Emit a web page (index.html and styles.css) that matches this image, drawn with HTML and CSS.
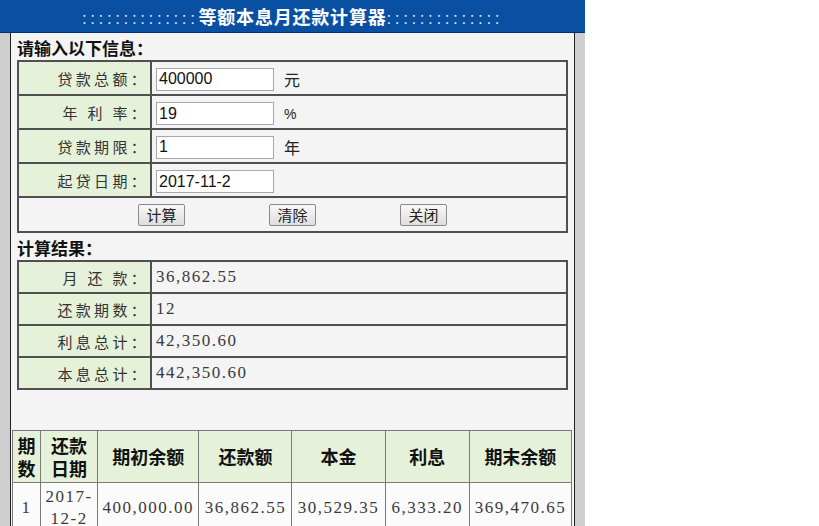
FILE: index.html
```html
<!DOCTYPE html>
<html lang="zh-CN">
<head>
<meta charset="utf-8">
<title>等额本息月还款计算器</title>
<link rel="stylesheet" href="styles.css">
</head>
<body>
<div class="wrap">
  <div class="header"><span class="dots">::::::::::::::</span><span class="title">等额本息月还款计算器</span><span class="dots">::::::::::::::</span></div>
  <div class="panel">
    <div class="sec-title">请输入以下信息：</div>
    <table class="form">
      <tr><td class="lbl">贷款总额：</td><td class="val"><input class="inp" type="text" value="400000"><span class="unit">元</span></td></tr>
      <tr><td class="lbl">年&nbsp;利&nbsp;率：</td><td class="val"><input class="inp" type="text" value="19"><span class="unit pct">%</span></td></tr>
      <tr><td class="lbl">贷款期限：</td><td class="val"><input class="inp" type="text" value="1"><span class="unit">年</span></td></tr>
      <tr><td class="lbl">起贷日期：</td><td class="val"><input class="inp" type="text" value="2017-11-2"></td></tr>
      <tr><td class="btns" colspan="2"><div class="btnrow"><button class="btn">计算</button><button class="btn">清除</button><button class="btn">关闭</button></div></td></tr>
    </table>
    <div class="sec-title second">计算结果：</div>
    <table class="form result">
      <tr><td class="lbl">月&nbsp;还&nbsp;款：</td><td class="num">36,862.55</td></tr>
      <tr><td class="lbl">还款期数：</td><td class="num">12</td></tr>
      <tr><td class="lbl">利息总计：</td><td class="num">42,350.60</td></tr>
      <tr><td class="lbl">本息总计：</td><td class="num">442,350.60</td></tr>
    </table>
    <table class="sched">
      <tr class="head">
        <th class="c1">期数</th><th class="c2">还款日期</th><th class="c3">期初余额</th><th class="c4">还款额</th><th class="c5">本金</th><th class="c6">利息</th><th class="c7">期末余额</th>
      </tr>
      <tr>
        <td>1</td><td>2017-12-2</td><td>400,000.00</td><td>36,862.55</td><td>30,529.35</td><td>6,333.20</td><td>369,470.65</td>
      </tr>
    </table>
  </div>
</div>
</body>
</html>
```
FILE: styles.css
```css
html, body {
  margin: 0;
  padding: 0;
  background: #ffffff;
}
body {
  font-family: "Noto Sans CJK SC", "Liberation Sans", sans-serif;
  color: #222;
}
.wrap {
  width: 585px;
  background: #cfcfcf;
}
.header {
  height: 32px;
  line-height: 32px;
  background: #0a50a2;
  border-bottom: 1px solid #05306a;
  color: #ffffff;
  text-align: center;
  font-weight: bold;
  font-size: 18px;
  white-space: nowrap;
}
.dots {
  font-family: "Liberation Sans", sans-serif;
  font-weight: normal;
  font-size: 17px;
  letter-spacing: 3.6px;
  color: #dfe8f5;
}
.title {
  letter-spacing: 0.8px;
}
.panel {
  margin: 0 10px;
  width: 563px;
  border-left: 1px solid #222;
  border-right: 1px solid #222;
  background: #f4f4f4;
  padding: 3px 0 0 0;
  min-height: 540px;
}
.sec-title {
  margin-left: 6px;
  font-size: 17px;
  font-weight: bold;
  line-height: 24px;
  height: 24px;
  color: #111;
}
.sec-title.second {
  margin-top: 3px;
}
.form {
  margin-left: 6px;
  width: 551px;
  border-collapse: collapse;
  border: 2px solid #505050;
}
.form td {
  border: 2px solid #505050;
  height: 32px;
  padding: 0;
}
.form .lbl {
  width: 130px;
  background: #e5f1d9;
  text-align: right;
  padding-right: 1px;
  font-size: 15px;
  letter-spacing: 3.3px;
  color: #333;
}
.form .val {
  padding-left: 4px;
  background: #f4f4f4;
}
.inp {
  box-sizing: border-box;
  width: 118px;
  height: 23px;
  border: 1px solid #a8a8a8;
  background: #ffffff;
  padding: 0 2px;
  font-family: "Liberation Sans", sans-serif;
  font-size: 16px;
  color: #111;
  vertical-align: middle;
  margin: 0;
}
.unit {
  margin-left: 10px;
  font-size: 16px;
  color: #222;
  vertical-align: middle;
}
.unit.pct {
  font-family: "Liberation Sans", sans-serif;
  font-size: 14px;
}
.form .btns {
  height: 33px;
  background: #f4f4f4;
}
.btnrow {
  display: flex;
  justify-content: center;
  gap: 84px;
}
.btn {
  width: 47px;
  height: 22px;
  padding: 0;
  border: 1px solid #8a8a8a;
  border-radius: 2px;
  background: linear-gradient(#f8f8f8, #dedede);
  font-family: "Noto Sans CJK SC", sans-serif;
  font-size: 15px;
  line-height: 20px;
  color: #222;
}
.result td {
  height: 30px;
}
.result .num {
  padding-left: 4px;
  background: #f4f4f4;
  font-family: "Liberation Serif", serif;
  font-size: 17px;
  letter-spacing: 1.5px;
  color: #3a3a3a;
}
.sched {
  margin: 40px 0 0 1px;
  width: 560px;
  border-collapse: collapse;
  border: 1px solid #7a7a7a;
}
.sched th, .sched td {
  border: 1px solid #7a7a7a;
  padding: 0 3px;
  text-align: center;
}
.sched th {
  height: 51px;
  background: #e5f1d9;
  font-size: 18px;
  font-weight: bold;
  line-height: 23px;
  color: #111;
}
.sched td {
  height: 50px;
  background: #fbfbfb;
  font-family: "Liberation Serif", serif;
  font-size: 17px;
  letter-spacing: 1.5px;
  line-height: 22px;
  color: #3a3a3a;
}
.sched .c1 { width: 21px; padding: 0 3px; }
.sched .c2 { width: 50px; }
.sched .c3 { width: 94px; }
.sched .c4 { width: 86px; }
.sched .c5 { width: 86px; }
.sched .c6 { width: 77px; }
.sched .c7 { width: 95px; }
```
